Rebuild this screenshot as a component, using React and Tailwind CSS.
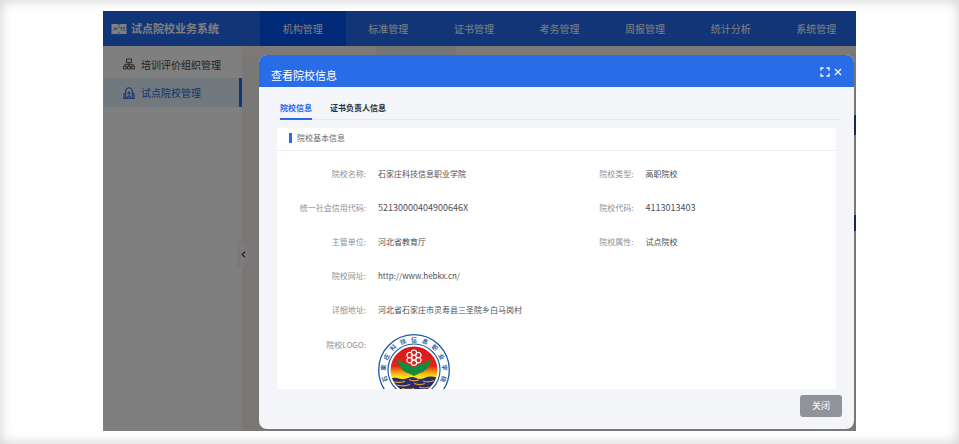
import React from "react";

const NAV = ["机构管理", "标准管理", "证书管理", "考务管理", "周报管理", "统计分析", "系统管理"];

const FIELDS = [
  { label: "院校名称", value: "石家庄科技信息职业学院" },
  { label: "院校类型", value: "高职院校" },
  { label: "统一社会信用代码", value: "52130000404900646X", number: true },
  { label: "院校代码", value: "4113013403", number: true },
  { label: "主管单位", value: "河北省教育厅" },
  { label: "院校属性", value: "试点院校" },
  { label: "院校网址", value: "http://www.hebkx.cn/", wide: true },
  { label: "详细地址", value: "河北省石家庄市灵寿县三圣院乡白马岗村", wide: true },
];

function BookIcon() {
  return (
    <svg className="h-3 w-4" viewBox="0 0 16 12" aria-hidden="true">
      <path d="M.5 1h6L8 1.8 9.5 1h6v10h-6l-1.500.6L6.500 11h-6z" fill="#fff" />
      <path d="M8 2.500v2M8 9v2M2.500 7.500l1.500-3 1 2.500 1.500-2.500M9 4.500h1.500v3M12 4.500h2M11.800 6h2M12.500 7.500h1.500" stroke="#2a68ec" strokeWidth=".7" fill="none" />
    </svg>
  );
}

function OrgIcon() {
  return (
    <svg className="h-3 w-3" viewBox="0 0 12 12" fill="none" stroke="currentColor" strokeWidth=".9" aria-hidden="true">
      <path d="M3.500 1h5v3.500h-5zM.5 8.200h2.800v2.800H.5zM4.600 8.200h2.800v2.800H4.600zM8.700 8.200h2.800v2.800H8.700zM6 4.500v3.700M1.900 8.200V6.300h8.200v1.900" />
    </svg>
  );
}

function SchoolIcon() {
  return (
    <svg className="h-3 w-3" viewBox="0 0 12 12" fill="none" stroke="currentColor" aria-hidden="true">
      <path d="M0 11.300h12M2.500 6.500h-1.500v4.800M9.500 6.500h1.500v4.800M2.700 11.300V4a3.300 3.300 0 0 1 6.600 0v7.300M4.800 11.300V9h2.400v2.300M4.300 6h3.400M6 4.300v3.400" />
    </svg>
  );
}

function Emblem() {
  const letters = Array.from("石家庄科技信息职业学院");
  return (
    <svg className="h-[72px] w-[72px]" viewBox="-36 -36 72 72" role="img" aria-label="院校LOGO">
      <defs>
        <linearGradient id="sky" x1="0" y1="0" x2="0" y2="1">
          <stop offset="0" stopColor="#d8161c" />
          <stop offset=".42" stopColor="#e3241b" />
          <stop offset=".54" stopColor="#f39a12" />
          <stop offset=".64" stopColor="#fde018" />
          <stop offset="1" stopColor="#f6b51c" />
        </linearGradient>
        <clipPath id="disc">
          <circle r="23.5" />
        </clipPath>
      </defs>
      <circle r="35.3" fill="#fff" stroke="#1d5c9c" strokeWidth="1.3" />
      <circle r="26" fill="#fff" stroke="#1d5c9c" strokeWidth="1.2" />
      <g fill="#1f5fa3" fontSize="6" fontWeight="700" textAnchor="middle">
        {letters.map((c, i) => (
          <text key={i} y="-28.3" transform={`rotate(${(i - 5) * 21.4})`}>
            {c}
          </text>
        ))}
      </g>
      <g clipPath="url(#disc)">
        <rect x="-24" y="-24" width="48" height="48" fill="url(#sky)" />
        <path d="M-24 9q4-2 9-.5t9-.5 8 0 9-.3 13 .3V24h-48z" fill="#292c68" />
        <path
          d="M-21 11.5q6 2 12-.3M-5 9.5q5 2.5 10 .2M9 11q6 2 11-.5M-17 15q7 2 13-.5M0 13.5q6 2 11 0M-12 18.5q7 2 12-.3M5 17q6 2 10 0"
          fill="none"
          stroke="#eda92a"
          strokeWidth="1.2"
        />
        <path d="M-16.5-11.5C-11-6-5-6.5 0-2.5 5-6.5 11-6 17-11.5 16-3 11 2 5 3.5L0 6l-5-2.5C-11 2-15.5-3-16.5-11.5z" fill="#138a3d" />
      </g>
      <g fill="none" stroke="#fff" strokeWidth="1.1">
        {[0, 60, 120, 180, 240, 300].map((a) => (
          <circle key={a} cx="5" cy="0" r="2.7" transform={`translate(0 -12.3) rotate(${a + 30})`} />
        ))}
        <circle cy="-12.3" r="2.4" />
      </g>
    </svg>
  );
}

function SideItem({ icon, label, active }) {
  return (
    <a
      href="#"
      className={
        active
          ? "flex h-[29px] items-center gap-[6px] border-r-[3px] border-[#2a68ec] bg-[#e2f0fc] pl-5 text-[10px] text-[#2a62dc]"
          : "flex h-7 items-center gap-[6px] pl-5 text-[10px] text-[#444]"
      }
    >
      {icon}
      <span>{label}</span>
    </a>
  );
}

function Field({ label, value, number, wide }) {
  return (
    <div className={wide ? "col-span-2 flex h-[34px] items-center gap-3" : "flex h-[34px] items-center gap-3"}>
      <dt className="w-[89px] shrink-0 text-right text-[#8f9197]">{label}:</dt>
      <dd className={number ? "text-[9px] text-[#4d4f55]" : "text-[#4d4f55]"}>{value}</dd>
    </div>
  );
}

function SchoolDialog() {
  return (
    <section
      role="dialog"
      aria-labelledby="dialog-title"
      className="absolute top-11 right-[2px] bottom-[2px] left-[156px] flex flex-col overflow-hidden rounded-lg bg-[#f4f5f9]"
    >
      <header className="flex h-8 shrink-0 items-center justify-between bg-[#296ce8] px-3 text-white">
        <h2 id="dialog-title" className="pt-2 text-[11px]">
          查看院校信息
        </h2>
        <div className="flex items-center gap-1 pt-[2px]">
          <button type="button" aria-label="全屏">
            <svg className="h-[10px] w-[10px]" viewBox="0 0 10 10" fill="none" stroke="currentColor" strokeWidth="1.3">
              <path d="M3.5 1H1v2.5M6.5 1H9v2.5M3.5 9H1V6.5M6.5 9H9V6.5" />
            </svg>
          </button>
          <button type="button" aria-label="关闭窗口">
            <svg className="h-2 w-2" viewBox="0 0 8 8" fill="none" stroke="currentColor" strokeWidth="1.1">
              <path d="M1 1l6 6M7 1L1 7" />
            </svg>
          </button>
        </div>
      </header>

      <div role="tablist" className="mr-[14px] mb-2 ml-[21px] flex h-[33px] shrink-0 gap-[18px] border-b border-[#e6e8ee] pt-[11px] text-[8px] font-bold">
        <button type="button" role="tab" aria-selected="true" className="-mb-px border-b-2 border-[#2a68ec] text-[#2a68ec]">
          院校信息
        </button>
        <button type="button" role="tab" aria-selected="false" className="-mb-px border-b-2 border-transparent text-[#2c2e33]">
          证书负责人信息
        </button>
      </div>

      <div className="mx-[18px] min-h-0 flex-1 overflow-hidden bg-white text-[8px]">
        <h3 className="flex h-[23px] items-center gap-[5px] border-b border-[#ececf0] pb-[2px] pl-3 text-[#66686e]">
          <span className="h-[10px] w-[3px] bg-[#2a68ec]" />
          院校基本信息
        </h3>
        <dl className="grid grid-cols-2 pt-[6px] pr-6">
          {FIELDS.map((f) => (
            <Field key={f.label} {...f} />
          ))}
          <div className="col-span-2 flex gap-3">
            <dt className="w-[89px] shrink-0 pt-3 text-right text-[#8f9197]">院校LOGO:</dt>
            <dd className="pt-[7px]">
              <Emblem />
            </dd>
          </div>
        </dl>
      </div>

      <footer className="flex h-10 shrink-0 justify-end pt-[6px] pr-3">
        <button type="button" className="h-[22px] w-[42px] rounded-[3px] bg-[#909399] text-[9px] text-white">
          关闭
        </button>
      </footer>
    </section>
  );
}

export default function App() {
  return (
    <div className="h-screen bg-white px-[103px] pt-[11px] pb-[13px] font-['Noto_Sans_CJK_SC','Noto_Sans',sans-serif] shadow-[inset_0_0_12px_1px_#d4d4d4]">
      <div className="relative flex h-full flex-col overflow-hidden bg-[#f6efec]">
        <header className="flex h-[35px] shrink-0 bg-[#246af0] text-white">
          <div className="flex w-[157px] shrink-0 items-center gap-1 pl-2">
            <BookIcon />
            <h1 className="text-[11px] font-bold whitespace-nowrap">试点院校业务系统</h1>
          </div>
          <nav className="-mr-[3px] flex flex-1 text-[10px]">
            {NAV.map((n, i) => (
              <a
                key={n}
                href="#"
                className={i === 0 ? "flex flex-1 items-center justify-center bg-[#0052ee]" : "flex flex-1 items-center justify-center"}
              >
                {n}
              </a>
            ))}
          </nav>
        </header>

        <div className="flex flex-1">
          <aside className="relative w-[139px] shrink-0 bg-white pt-1">
            <SideItem icon={<OrgIcon />} label="培训评价组织管理" />
            <SideItem icon={<SchoolIcon />} label="试点院校管理" active />
            <button
              type="button"
              aria-label="收起菜单"
              className="absolute top-[194px] -right-[7px] flex h-7 w-3 items-center justify-center rounded-r-full bg-[#f8f4f4] text-[#444]"
            >
              <svg className="h-[7px] w-[5px]" viewBox="0 0 5 7" fill="none" stroke="currentColor" strokeWidth="1.2">
                <path d="M4 .8L1.2 3.5 4 6.2" />
              </svg>
            </button>
          </aside>
          <main className="flex flex-1 flex-col bg-[#f4eeef]">
            <div className="flex h-[9px] bg-[#fbf3ec] pl-[134px]">
              <span className="w-20 bg-[#e8ebe6]" />
            </div>
            <div className="flex flex-col items-end gap-20 pt-[60px]">
              <span className="h-5 w-6 bg-[#2c4fb4]" />
              <span className="h-4 w-6 bg-[#2c4fb4]" />
            </div>
          </main>
        </div>

        <div className="absolute inset-0 bg-black/50" />
        <SchoolDialog />
      </div>
    </div>
  );
}
